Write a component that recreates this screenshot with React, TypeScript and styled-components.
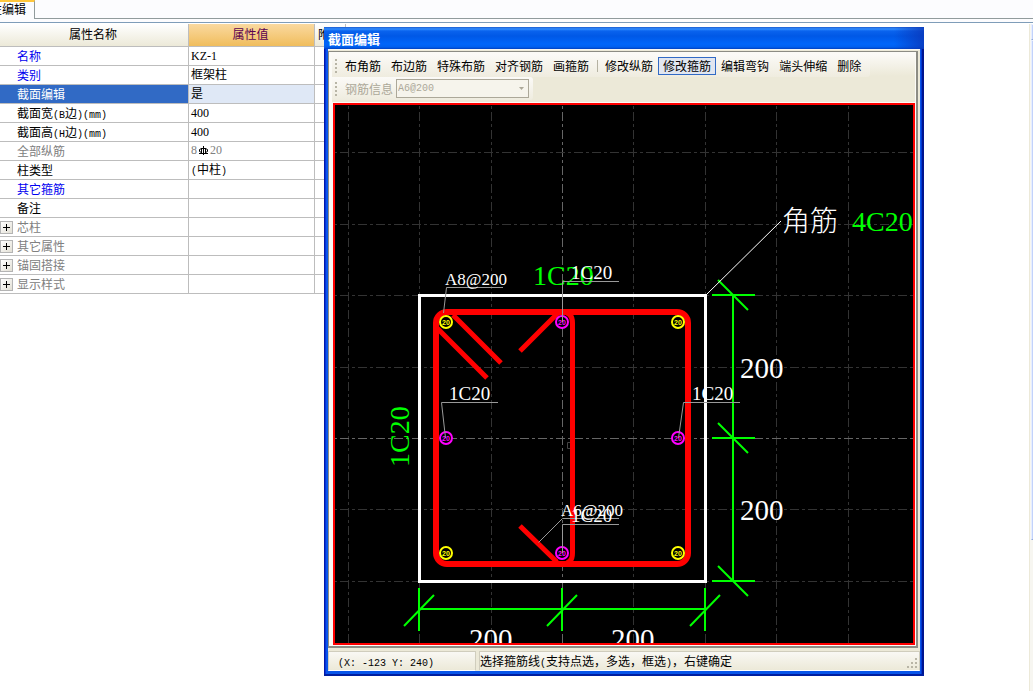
import React from 'react';
import styled, { createGlobalStyle } from 'styled-components';

const GlobalStyle = createGlobalStyle`
  * { box-sizing: border-box; }
  body {
    margin: 0;
    background: #fff;
    color: #000;
    font-family: "Noto Sans CJK SC", sans-serif;
    font-size: 12px;
    line-height: 18px;
  }
`;

/* ---------- text ---------- */

const Latin = styled.span<{ $mono: boolean }>`
  font-family: ${(p) => (p.$mono ? '"Liberation Mono", monospace' : '"Liberation Serif", serif')};
  font-size: ${(p) => (p.$mono ? '10px' : '12px')};
  line-height: 10px;
  white-space: pre;
`;

function Mixed({ text }: { text: string }) {
  const runs = text.match(/[\x20-\x7e]+|[^\x20-\x7e]+/g) ?? [];
  return (
    <>
      {runs.map((run, i) =>
        /^[\x20-\x7e]/.test(run) ? (
          <Latin key={i} $mono={/[()@]/.test(run)}>{run}</Latin>
        ) : (
          <React.Fragment key={i}>{run}</React.Fragment>
        ),
      )}
    </>
  );
}

/* ---------- page ---------- */

const Page = styled.div`
  position: relative;
  display: flex;
  flex-direction: column;
  min-height: 100vh;
  overflow: hidden;
`;

const TabStrip = styled.div`
  display: flex;
  height: 22px;
  background: #fcfcfe;
`;

const Tab = styled.button`
  display: flex;
  justify-content: flex-end;
  width: 35px;
  height: 19px;
  padding: 0 8px 0 0;
  border: 0;
  border-top: 2px solid #ffc73c;
  border-right: 1px solid #919b9c;
  background: #fcfcfe;
  font: inherit;
  line-height: 13px;
  white-space: nowrap;
  overflow: hidden;
`;

const TabRule = styled.div`
  flex: 1;
  height: 19px;
  border-bottom: 1px solid #919b9c;
`;

const Workspace = styled.div`
  display: flex;
  flex: 1;
  padding-top: 1px;
  border-top: 1px solid #7f9db9;
`;

const PropertyTable = styled.table`
  width: 346px;
  align-self: flex-start;
  table-layout: fixed;
  border-collapse: separate;
  border-spacing: 0;
`;

const HeaderCell = styled.th<{ $accent?: boolean; $start?: boolean }>`
  height: 23px;
  padding: ${(p) => (p.$start ? '0 0 2px 3px' : '0 2px 2px 0')};
  border-right: 1px solid #bdbdbd;
  border-bottom: 1px solid #bdbdbd;
  background: ${(p) =>
    p.$accent ? 'linear-gradient(#fad9a0, #f0bd5c)' : 'linear-gradient(#fff, #ece9d8)'};
  color: ${(p) => (p.$accent ? '#5b0050' : '#000')};
  font-weight: 400;
  line-height: 20px;
  text-align: ${(p) => (p.$start ? 'left' : 'center')};
  white-space: nowrap;
  overflow: hidden;
`;

const NameCell = styled.td<{ $color: string; $selected?: boolean }>`
  height: 19px;
  padding: 0;
  border-right: 1px solid #bdbdbd;
  border-bottom: 1px solid #bdbdbd;
  background: ${(p) => (p.$selected ? '#316ac5' : '#fff')};
  color: ${(p) => p.$color};
`;

const NameLine = styled.div`
  display: flex;
  align-items: center;
  height: 18px;
`;

const Gutter = styled.div`
  width: 17px;
`;

const Expander = styled.button`
  display: flex;
  align-items: center;
  justify-content: center;
  width: 13px;
  height: 13px;
  padding: 0;
  border: 1px solid #b4b4b4;
  background: linear-gradient(135deg, #fff, #e2dfd4);
`;

const ValueCell = styled.td<{ $selected?: boolean; $muted?: boolean }>`
  height: 19px;
  padding: 0 0 2px 2px;
  border-right: 1px solid #bdbdbd;
  border-bottom: 1px solid #bdbdbd;
  background: ${(p) => (p.$selected ? '#dfe8f6' : '#fff')};
  color: ${(p) => (p.$muted ? '#808080' : '#000')};
  line-height: 16px;
`;

const RebarValue = styled.div`
  display: flex;
  align-items: center;
`;

const Filler = styled.div`
  flex: 1;
`;

const ScrollTrack = styled.div`
  display: flex;
  flex-direction: column;
  width: 4px;
  border-left: 1px solid #ece9d8;
  padding-left: 1px;
  background: #f7f6f1;
`;

const ScrollPart = styled.div<{ $grow?: boolean }>`
  flex: 0 0 ${(p) => (p.$grow ? '75%' : '16px')};
  border: 1px solid #e6eeff;
  border-right: 0;
  border-bottom-color: #8fa9dc;
  background: #c2d2fb;
`;

/* ---------- floating window ---------- */

const Window = styled.section`
  position: absolute;
  top: 27px;
  left: 324px;
  right: 109px;
  min-width: 560px;
  padding: 0 4px 5px;
  background: linear-gradient(90deg, #0019a8 0 1px, #0831d9 1px 2px, #0855ea 2px calc(100% - 3px), #0036d0 calc(100% - 3px) calc(100% - 2px), #001590 calc(100% - 2px));
  box-shadow: inset 0 -2px 0 #001ea0;
`;

const TitleBar = styled.h1`
  height: 22px;
  margin: 0 -4px;
  padding: 3px 4px 0;
  background:
    linear-gradient(90deg, transparent 95%, #0a36b8cc),
    linear-gradient(#1c5cd0 0, #2f8cff 2px, #0a63ee 4px, #0058e6 9px, #0066fa 17px, #0060f0 20px, #0040c0 22px);
  color: #fff;
  font-size: 13px;
  font-weight: 700;
  line-height: 18px;
`;

const ClientArea = styled.div`
  background: #ece9d8;
  padding-top: 1px;
  border-top: 1px solid #f8f8f4;
`;

const Frame = styled.div`
  margin-right: 2px;
  padding: 2px 1px 1px 4px;
  border: 1px solid #8c8c84;
  border-right-width: 2px;
  border-bottom-width: 2px;
  background: #fbfaf6;
`;

const ToolArea = styled.div`
  margin: 0 0 1px -1px;
  height: 48px;
  background: linear-gradient(#fbfaf7, #ece9d8 22px);
`;

const ToolRow = styled.div`
  display: flex;
  align-items: center;
  width: max-content;
  height: 23px;
  padding: 0 4px 0 3px;
  border-radius: 0 3px 3px 0;
  background: linear-gradient(#fbfaf7, #efecdf);
`;

const Grip = styled.svg`
  display: block;
  margin-right: 3px;
`;

const ToolButton = styled.button<{ $pressed?: boolean }>`
  height: 18px;
  padding: 0 4px;
  border: 1px solid ${(p) => (p.$pressed ? '#316ac5' : 'transparent')};
  background: ${(p) => (p.$pressed ? '#e1e6f0' : 'transparent')};
  color: #000;
  font: inherit;
  line-height: 15px;
  white-space: nowrap;
`;

const Separator = styled.div`
  width: 1px;
  height: 12px;
  margin: 0 2px 0 3px;
  background: #b5b2a2;
`;

const FieldLabel = styled.label`
  margin: 0 3px 0 5px;
  color: #aca899;
  line-height: 16px;
`;

const SelectBox = styled.div`
  display: grid;
  align-items: center;
  width: 133px;
  height: 19px;
  border: 1px solid #aca899;
  background: #f6f4ec;
`;

const Select = styled.select`
  grid-area: 1 / 1;
  width: 100%;
  height: 17px;
  padding: 0 1px;
  border: 0;
  appearance: none;
  background: transparent;
  color: #aca899;
  font: 10px/16px "Liberation Mono", monospace;
  opacity: 1;
`;

const Arrow = styled.svg`
  grid-area: 1 / 1;
  justify-self: end;
  margin-right: 4px;
  pointer-events: none;
`;

const Canvas = styled.div`
  border: 2px solid #f00;
  background: #000;
`;

const Drawing = styled.svg`
  display: block;
  width: 100%;
  height: auto;
`;

const StatusBar = styled.footer`
  display: flex;
  gap: 3px;
  margin-top: 3px;
`;

const StatusCell = styled.div<{ $fixed?: boolean }>`
  display: flex;
  justify-content: space-between;
  align-items: flex-end;
  flex: ${(p) => (p.$fixed ? '0 0 148px' : '1')};
  height: 20px;
  padding-left: ${(p) => (p.$fixed ? '9px' : '0')};
  border: 1px solid #d0cdbd;
  border-bottom-color: #fff;
  background: linear-gradient(#f9f8f4, #ece9d8);
  white-space: nowrap;
`;

/* ---------- data ---------- */

const BLUE = '#0000f0';
const GREY = '#808080';

type Row = { name: string; value?: string; color?: string; selected?: boolean; group?: boolean; rebar?: boolean };

const rows: Row[] = [
  { name: '名称', value: 'KZ-1', color: BLUE },
  { name: '类别', value: '框架柱', color: BLUE },
  { name: '截面编辑', value: '是', color: '#fff', selected: true },
  { name: '截面宽(B边)(mm)', value: '400' },
  { name: '截面高(H边)(mm)', value: '400' },
  { name: '全部纵筋', color: GREY, rebar: true },
  { name: '柱类型', value: '(中柱)' },
  { name: '其它箍筋', color: BLUE },
  { name: '备注' },
  { name: '芯柱', color: GREY, group: true },
  { name: '其它属性', color: GREY, group: true },
  { name: '锚固搭接', color: GREY, group: true },
  { name: '显示样式', color: GREY, group: true },
];

const tools = ['布角筋', '布边筋', '特殊布筋', '对齐钢筋', '画箍筋', '|', '修改纵筋', '修改箍筋', '编辑弯钩', '端头伸缩', '删除'];

/* ---------- section drawing ---------- */

const SERIF = '"Liberation Serif", serif';
const GREEN = '#00ff00';

function Bar({ x, y, color }: { x: number; y: number; color: string }) {
  return (
    <g>
      <circle cx={x} cy={y} r={6} fill="#000" stroke={color} strokeWidth={2} />
      <text x={x} y={y + 3} fill={color} fontSize={7} fontWeight={700} textAnchor="middle" fontFamily='"Liberation Sans", sans-serif'>20</text>
    </g>
  );
}

function SectionDrawing() {
  const columns = [348, 419, 491, 562, 633, 705, 776, 848];
  const lines = [152, 224, 295, 367, 438, 509, 581];
  return (
    <Drawing viewBox="335 105 578 538" role="img" aria-label="截面">
      <g strokeWidth={1} strokeDasharray="9 3 3 3">
        {columns.map((x) => (
          <path key={x} d={`M${x + 0.5} 105V643`} stroke={x === 562 ? '#666' : '#333'} strokeDashoffset={11} />
        ))}
        {lines.map((y) => (
          <path key={y} d={`M335 ${y + 0.5}H913`} stroke={y === 438 ? '#666' : '#333'} strokeDashoffset={13} />
        ))}
      </g>
      <path d="M571 442.500H567.500V448.500H571" fill="none" stroke="#444" />

      <rect x={419.5} y={295.5} width={286} height={286} fill="none" stroke="#fff" strokeWidth={3} />

      <g fill="none" stroke="#f00">
        <rect x={436} y={312} width={252} height={252} rx={11} strokeWidth={6} />
        <path d="M562 312Q572.500 312 572.500 323V553Q572.500 564 562 564" strokeWidth={5} />
        <path d="M558 313L520 351M453 315L501 363M437 328L487 378M520 526L557 562" strokeWidth={5} />
      </g>

      <g fill="none" stroke={GREEN} strokeWidth={2}>
        <path d="M733 295V581M419 609H705" />
        {[295, 438, 581].map((y) => (
          <path key={y} d={`M712 ${y}H755M718 ${y - 15}L748 ${y + 15}`} />
        ))}
        {[419, 562, 705].map((x) => (
          <path key={x} d={`M${x} 588V631M${x - 15} 626L${x + 15} 595`} />
        ))}
      </g>

      {[446, 678].map((x) => [322, 553].map((y) => <Bar key={`${x}-${y}`} x={x} y={y} color="#ffff00" />))}
      <Bar x={562} y={322} color="#ff00ff" />
      <Bar x={446} y={438} color="#ff00ff" />
      <Bar x={678} y={438} color="#ff00ff" />
      <Bar x={562} y={553} color="#ff00ff" />

      <path d="M706 295L781 221" stroke="#fff" />
      <g fontFamily={SERIF} fontSize={28} fill={GREEN}>
        <text x={533} y={285}>1C20</text>
        <text x={852} y={231}>4C20</text>
        <text transform="translate(409 467) rotate(-90)">1C20</text>
      </g>
      <g fontFamily={SERIF} fontSize={29} fill="#fff">
        <text x={740} y={378}>200</text>
        <text x={740} y={520}>200</text>
        <text x={469} y={649}>200</text>
        <text x={611} y={649}>200</text>
      </g>
      <text x={782} y={231} fontFamily='"Noto Sans CJK SC", sans-serif' fontSize={28} fontWeight={300} fill="#fff">角筋</text>

      <g fill="none" stroke="#999">
        <path d="M503 287.500H446.500L443.500 313" />
        <path d="M619 281.500H562.500V322" />
        <path d="M498 402.500H441.500L445.500 438" />
        <path d="M740 402.500H683.500L678.500 438" />
        <path d="M619 518.500H562.500L538.500 542.500" />
        <path d="M619 524.500H562.500V553" />
      </g>
      <g fontFamily={SERIF} fontSize={19} fill="#fff">
        <text x={571} y={279}>1C20</text>
        <text x={449} y={400}>1C20</text>
        <text x={692} y={400}>1C20</text>
        <text x={571} y={522}>1C20</text>
      </g>
      <g fontFamily={SERIF} fontSize={17} fill="#fff">
        <text x={445} y={285}>A8@200</text>
        <text x={561} y={516}>A6@200</text>
      </g>
    </Drawing>
  );
}

function GripDots() {
  return (
    <Grip width={2} height={14} fill="#b8b5a6" aria-hidden="true">
      {[0, 4, 8, 12].map((y) => (
        <rect key={y} y={y} width={2} height={2} />
      ))}
    </Grip>
  );
}

export default function App() {
  return (
    <Page>
      <GlobalStyle />
      <TabStrip>
        <Tab type="button">性编辑</Tab>
        <TabRule />
      </TabStrip>
      <Workspace>
        <PropertyTable>
          <colgroup>
            <col style={{ width: 189 }} />
            <col style={{ width: 126 }} />
            <col />
          </colgroup>
          <thead>
            <tr>
              <HeaderCell>属性名称</HeaderCell>
              <HeaderCell $accent>属性值</HeaderCell>
              <HeaderCell $start>附加</HeaderCell>
            </tr>
          </thead>
          <tbody>
            {rows.map((row) => (
              <tr key={row.name}>
                <NameCell $color={row.color ?? '#000'} $selected={row.selected}>
                  <NameLine>
                    <Gutter>
                      {row.group && (
                        <Expander type="button" aria-label={`展开 ${row.name}`}>
                          <svg width={7} height={7} stroke="#000">
                            <path d="M0 3.500H7M3.500 0V7" />
                          </svg>
                        </Expander>
                      )}
                    </Gutter>
                    <span><Mixed text={row.name} /></span>
                  </NameLine>
                </NameCell>
                <ValueCell $selected={row.selected} $muted={row.rebar}>
                  {row.rebar ? (
                    <RebarValue>
                      <Latin $mono={false}>8</Latin>
                      <svg width={13} height={11} fill="none" stroke="#000">
                        <path d="M6.500 1V10M4.500 3V8.500M8.500 3V8.500M2.500 4.500V6.500L4.500 7.500M8.500 3.500L10.500 4.500V6.500L8.500 7.500M2.500 4.500L4.500 3.500H8.500M2 8.500H11" />
                      </svg>
                      <Latin $mono={false}>20</Latin>
                    </RebarValue>
                  ) : (
                    <Mixed text={row.value ?? ''} />
                  )}
                </ValueCell>
                <ValueCell />
              </tr>
            ))}
          </tbody>
        </PropertyTable>
        <Filler />
        <ScrollTrack>
          <ScrollPart />
          <ScrollPart $grow />
        </ScrollTrack>
      </Workspace>

      <Window>
        <TitleBar>截面编辑</TitleBar>
        <ClientArea>
          <Frame>
            <ToolArea>
              <ToolRow role="toolbar">
                <GripDots />
                {tools.map((tool) =>
                  tool === '|' ? (
                    <Separator key={tool} />
                  ) : (
                    <ToolButton key={tool} type="button" $pressed={tool === '修改箍筋'}>{tool}</ToolButton>
                  ),
                )}
              </ToolRow>
              <ToolRow>
                <GripDots />
                <FieldLabel htmlFor="rebar-info">钢筋信息</FieldLabel>
                <SelectBox>
                  <Select id="rebar-info" disabled defaultValue="A6@200">
                    <option>A6@200</option>
                  </Select>
                  <Arrow width={5} height={3} fill="#aca899">
                    <path d="M0 0H5L2.500 3Z" />
                  </Arrow>
                </SelectBox>
              </ToolRow>
            </ToolArea>
            <Canvas>
              <SectionDrawing />
            </Canvas>
          </Frame>
          <StatusBar>
            <StatusCell $fixed><span><Mixed text="(X: -123 Y: 240)" /></span></StatusCell>
            <StatusCell>
              <span><Mixed text="选择箍筋线(支持点选，多选，框选)，右键确定" /></span>
              <svg width={12} height={12} fill="#b8b5a6" aria-hidden="true">
                <path d="M8 0h2v2h-2zM8 4h2v2h-2zM4 4h2v2h-2zM8 8h2v2h-2zM4 8h2v2h-2zM0 8h2v2h-2z" />
              </svg>
            </StatusCell>
          </StatusBar>
        </ClientArea>
      </Window>
    </Page>
  );
}
